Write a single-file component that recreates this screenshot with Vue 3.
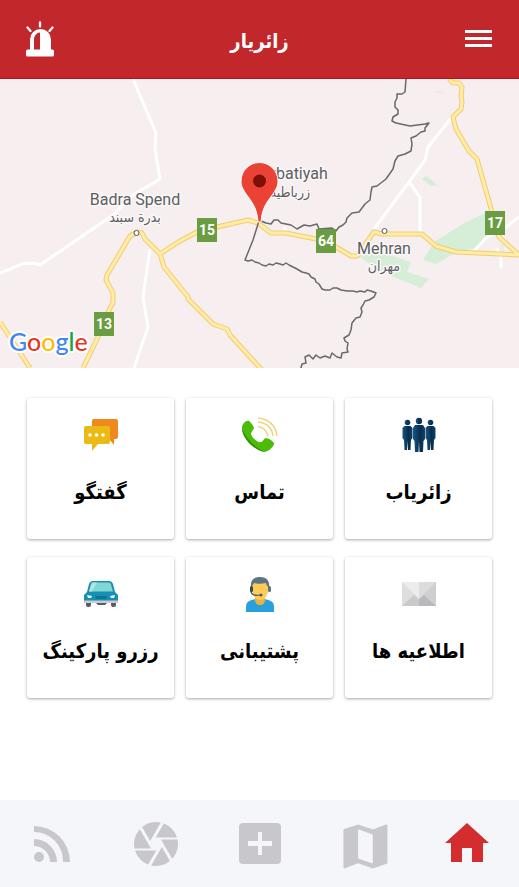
<template>
  <div class="app-page" dir="rtl" lang="fa">
    <header class="top-bar">
      <button class="icon-btn" type="button" aria-label="منو">
        <svg width="28" height="20" viewBox="0 0 28 20">
          <path d="M0 1h27v3H0zM0 8h27v3H0zM0 15h27v3H0z" fill="#fff" />
        </svg>
      </button>
      <h1 class="title">زائریار</h1>
      <button class="icon-btn" type="button" aria-label="اضطراری">
        <svg width="28" height="36" viewBox="0 0 28 36">
          <path d="M14 1.500v4M1.500 6.500l3 3.500M26.500 6.500l-3 3.500" stroke="#fff" stroke-width="2.300" stroke-linecap="round" />
          <path d="M4 28.500V18.500a10.500 10.500 0 0 1 21 0v10h1.500a1.500 1.500 0 0 1 1.500 1.500v4a1.500 1.500 0 0 1-1.500 1.500h-25A1.500 1.500 0 0 1 0 34v-4a1.500 1.500 0 0 1 1.500-1.500z" fill="#fff" />
          <path d="M14 11.500c-4 .5-6 3.500-6 7v10h6z" fill="#c1272b" />
        </svg>
      </button>
    </header>

    <section class="map" dir="ltr">
      <svg class="map-canvas" viewBox="0 0 519 289">
        <!-- green areas -->
        <g fill="#d6edd8">
          <path d="M422 100l4-3 12 9-7 1z" />
          <path d="M423 181l11-18 32-20 20-9h19v8l-29 27-19 4-21 12z" />
          <path d="M359 177l15-6 37 12-4 10 22 7-8 9-22-9-20-8z" />
        </g>
        <path d="M434 13l9-1 3 3z M500 165h4v12l-6 2z" fill="#efebe0" />

        <!-- minor roads -->
        <g class="minor">
          <path d="M133 0L156 54 155 70 160 100 133 116 113 136 40 186 34 184 22 185 0 194" />
          <path d="M150 170L143 218 148 248 134 289" />
          <path d="M452 38L428 68 425 81 409 103 374 150M409 103L420 118V154" />
          <path d="M519 138L506 148 486 159 474 172M497 169L501 180V189M284 148l3 6" />
        </g>

        <!-- highways: casing, then fill -->
        <g v-for="layer in ['casing', 'fill']" :key="layer" :class="['highway', layer]">
          <path v-for="road in highways" :key="road" :d="road" />
        </g>

        <!-- country border -->
        <g class="border">
          <path d="M406 0L405 13 402 15 397 15 397 19 395 23 395 28 398 31 398 35 393 38 392 42 396 44 410 47 425 45 429 44 425 49 425 52 421 53 416 57 411 59 412 65 411 72 405 75 398 77 395 82 393 90 386 100 377 107 372 108 371 113 370 121 365 125 359 133 352 134 347 139 346 143 343 146 339 148 336 152 332 149 319 150 317 145 310 147 304 146 297 150 291 146 286 145 281 144 278 141 274 141 271 145 266 144 261 142" />
          <path d="M259 142l-6 19-8 20 3 1 4-1 3 2 4 1 3 2 4 1 3-2 4 1 3-2 4 1 3 1 3-2 3 2 4 2 4 2 5 3 4 1 3 1 2 3 4 2 1 3 3 2 3 5 3 1 5 0 3-2 4 0 4 2 6 1 6 0 4 1 3-1 5 1 2-2 4 1 5 2-2 4-5 3-4 1-2 4-2 3 1 4-2 5-4 1-4 5-1 7-2 5-5 3 1 3 3 2-1 6 1 3-6 1-1 5-4-1-5-4-2 5-5-2-5 2-4-3-3 4-4-4-4 2 1 6-4 1-1 4-3 2" />
        </g>
        <circle cx="136.500" cy="154" r="2.500" class="town" />
        <circle cx="384.500" cy="152" r="2.500" class="town" />

        <!-- road shields -->
        <g v-for="s in shields" :key="s.label">
          <rect :x="s.x" :y="s.y" width="20" height="24" fill="#6a9d41" />
          <text :x="s.x + 10" :y="s.y + 17" class="shield">{{ s.label }}</text>
        </g>

        <!-- place names -->
        <text v-for="p in places" :key="p.name" :x="p.x" :y="p.y" :class="p.arabic ? 'place-ar' : 'place'">{{ p.name }}</text>

        <!-- marker -->
        <path d="M258 143C257 129 252 123 246 115C242 109 241 106 241 102A18.500 18.500 0 0 1 278 102C278 106 277 109 273 115C267 123 262 129 261 143z" fill="#ea4335" stroke="#fff" />
        <circle cx="259.500" cy="102" r="6.500" fill="#7f1009" />

        <text x="9" y="272" class="google"><tspan fill="#4285f4">G</tspan><tspan fill="#ea3323">o</tspan><tspan fill="#fbbc05">o</tspan><tspan fill="#4285f4">g</tspan><tspan fill="#17a34a">l</tspan><tspan fill="#ea3323">e</tspan></text>
      </svg>
    </section>

    <main class="cards">
      <button class="card" type="button">
        <svg class="card-icon" viewBox="0 0 36 36">
          <defs>
            <linearGradient id="suit">
              <stop offset="0" stop-color="#165785" />
              <stop offset="0.600" stop-color="#082c4c" />
              <stop offset="1" stop-color="#10436b" />
            </linearGradient>
          </defs>
          <g fill="url(#suit)">
            <circle cx="6.500" cy="5.500" r="2.800" />
            <path d="M3.500 9h6l2 2v10l-1.500 2-.5 10H7l-.5-9L6 33H3.500L3 23l-1.500-2V11z" />
            <circle cx="29.500" cy="5.500" r="2.800" />
            <path d="M26.500 9h6l2 2v10L33 23l-.5 10H30l-.5-9-.5 9h-2.500L26 23l-1.500-2V11z" />
            <circle cx="18" cy="4" r="3.200" />
            <path d="M14 8h8l2 3v11l-1.500 2L22 35h-3.500L18 24l-.5 11H14l-.5-11-1.500-2V11z" />
          </g>
        </svg>
        <span>زائریاب</span>
      </button>

      <button class="card" type="button">
        <svg class="card-icon" viewBox="0 0 36 36">
          <path d="M0 11C0 7 4 3 7 4c2 1 5 6 5 7s-3 4-3 6c1 4 7 9 10 8 2 0 3-4 5-4s7 3 8 5-4 8-9 9C14 34 0 22 0 11z" fill="#4dbb0a" />
          <path d="M0 11c3 9 13 20 23 24C13 34 0 22 0 11z" fill="#329500" />
          <g fill="none" stroke="#f3d27a" stroke-width="1.500">
            <path d="M16 9.500c6 1 9 5 10 10M16 5c9 1 14 6 15 14M16 1c11 1 18 8 19 18" />
          </g>
        </svg>
        <span>تماس</span>
      </button>

      <button class="card" type="button">
        <svg class="card-icon" viewBox="0 0 36 36">
          <path d="M11 2h22a2 2 0 0 1 2 2v16a2 2 0 0 1-2 2h-2v6l-5-6H11a2 2 0 0 1-2-2V4a2 2 0 0 1 2-2z" fill="#ee8a1d" />
          <path d="M3 9h22a2 2 0 0 1 2 2v14a2 2 0 0 1-2 2H15l-6 7v-7H3a2 2 0 0 1-2-2V11a2 2 0 0 1 2-2z" fill="#ebba16" />
          <g fill="#fff">
            <circle cx="7" cy="18" r="1.800" />
            <circle cx="13.500" cy="18" r="1.800" />
            <circle cx="20" cy="18" r="1.800" />
          </g>
        </svg>
        <span>گفتگو</span>
      </button>

      <button class="card" type="button">
        <svg class="card-icon" viewBox="0 0 36 36">
          <path d="M1 6h34v24H1z" fill="#dededf" />
          <path d="M18 6h17v24H18z" fill="#cfcfd2" />
          <path d="M1 30l12-11 5 4v7z" fill="#cacacb" />
          <path d="M35 30L23 19l-5 4v7z" fill="#b9b9bd" />
          <path d="M1 6h17v17z" fill="#ececec" />
          <path d="M35 6H18v17z" fill="#dcdcdd" />
        </svg>
        <span>اطلاعیه ها</span>
      </button>

      <button class="card" type="button">
        <svg class="card-icon" viewBox="0 0 36 36">
          <path d="M4 36v-5c0-5 3-7 10-8h8c7 1 10 3 10 8v5z" fill="#28a0dc" />
          <path d="M13 20h10v4c0 3-2 5-5 5s-5-2-5-5z" fill="#eeb13c" />
          <path d="M10 9c0-4 3-6 8-6s9 2 9 7c0 8-4 14-9 14s-9-7-8-15z" fill="#fdcd56" />
          <path d="M9 12C8 5 11 1 18 1s10 4 9 11c-2-2-3-4-3-5-4 1-9 1-12 0z" fill="#5d7385" />
          <path d="M9 11v4c0 4 4 5 9 4" fill="none" stroke="#445868" stroke-width="1.200" />
          <rect x="8" y="10" width="3" height="6" rx="1.500" fill="#34495a" />
          <rect x="26" y="10" width="3" height="6" rx="1.500" fill="#5d7385" />
          <circle cx="19" cy="19" r="1.500" fill="#445868" />
        </svg>
        <span>پشتیبانی</span>
      </button>

      <button class="card" type="button">
        <svg class="card-icon" viewBox="0 0 36 36">
          <path d="M3 25h5v4a2 2 0 0 1-2 2H5a2 2 0 0 1-2-2zM28 25h5v4a2 2 0 0 1-2 2h-1a2 2 0 0 1-2-2zM13 25h11v2l-2 2h-7l-2-2z" fill="#5b5b5d" />
          <path d="M10 5h16c2 0 3 1 4 3l2 8 3 3v7H1v-7l3-3 2-8c1-2 2-3 4-3z" fill="#158fb3" />
          <path d="M10 6.500h16c1 0 2 1 2 2l2 7H6l2-7c0-1 1-2 2-2z" fill="#83d6d2" />
          <path d="M14 6.500L9 15.500H6l2-7c0-1 1-2 2-2z" fill="#aee5df" />
          <path d="M1 24.500h34V27H1z" fill="#c9cdd0" />
          <path d="M4 19l5 1-1 2H5zM32 19l-5 1 1 2h3z" fill="#effbff" />
          <path d="M12 20h12l-1 3H13z" fill="#097698" />
        </svg>
        <span>رزرو پارکینگ</span>
      </button>
    </main>

    <nav class="tab-bar">
      <a v-for="tab in tabs" :key="tab.label" href="#" :class="{ active: tab.active }" :aria-label="tab.label">
        <svg width="44" height="44" :viewBox="tab.box">
          <path :d="tab.icon" fill="currentColor" fill-rule="evenodd" />
        </svg>
      </a>
    </nav>
  </div>
</template>

<script setup>
const highways = [
  'M0 243L30 289',
  'M83 289L98 258 109 231 113 224V214L106 201 107 196 130 157 137 153 142 154 145 160 160 175 164 188 188 218 188 220 213 245 227 250 230 256 262 291',
  'M160 175L180 162 197 153 217 148 248 141 258 144 271 154 286 154 316 160 336 168 351 177 357 177 374 153 382 155 422 155 436 167 456 173 519 176',
  'M449 0L453 4 459 4 462 8 461 17 462 23 461 30 453 38 456 50 469 72 477 80 492 133 499 158 519 176'
]

const shields = [
  { label: '15', x: 197, y: 139 },
  { label: '64', x: 316, y: 150 },
  { label: '17', x: 485, y: 132 },
  { label: '13', x: 94, y: 233 }
]

const places = [
  { name: 'Badra Spend', x: 135, y: 126 },
  { name: 'بدرة سبند', x: 135, y: 143, arabic: true },
  { name: 'Zurbatiyah', x: 290, y: 100 },
  { name: 'زرباطية', x: 290, y: 118, arabic: true },
  { name: 'Mehran', x: 384, y: 175 },
  { name: 'مهران', x: 384, y: 192, arabic: true }
]

const tabs = [
  {
    label: 'خانه',
    active: true,
    box: '0 0 44 44',
    icon: 'M22 1L44 21H38V40H27V26H17V40H6V21H0z'
  },
  {
    label: 'نقشه',
    box: '2 2 18 18',
    icon: 'M20.500 3l-.16.03L15 5.100 9 3 3.360 4.900c-.21.07-.36.25-.36.48V20.500c0 .28.22.5.5.5l.16-.03L9 18.900l6 2.100 5.640-1.900c.21-.07.36-.25.36-.48V3.500c0-.28-.22-.5-.5-.5zM15 19l-6-2.110V5l6 2.110V19z'
  },
  {
    label: 'افزودن',
    box: '0 1 44 44',
    icon: 'M5 2H39A4 4 0 0 1 43 6V39A4 4 0 0 1 39 43H5A4 4 0 0 1 1 39V6A4 4 0 0 1 5 2zM20 11V20H10V25H20V34H24V25H34V20H24V11z'
  },
  {
    label: 'دوربین',
    box: '2 2 20 20',
    icon: 'M9.400 10.500l4.770-8.260C13.470 2.090 12.750 2 12 2c-2.400 0-4.600.85-6.320 2.250l3.660 6.350.06-.1zM21.540 9c-.92-2.920-3.150-5.260-6-6.340L11.880 9h9.660zm.26 1h-7.490l.29.5 4.760 8.250C21 16.970 22 14.610 22 12c0-.69-.07-1.350-.2-2zM8.540 12l-3.900-6.750C3.010 7.030 2 9.390 2 12c0 .69.07 1.350.2 2h7.490l-1.150-2zm-6.080 3c.92 2.920 3.150 5.260 6 6.340L12.120 15H2.460zm11.270 0l-3.900 6.760c.7.15 1.420.24 2.170.24 2.400 0 4.600-.85 6.320-2.250l-3.660-6.350-.93 1.600z'
  },
  {
    label: 'خبرها',
    box: '0 2 44 44',
    icon: 'M4 6A36 36 0 0 1 40 42H33A29 29 0 0 0 4 12zM4 19A23 23 0 0 1 27 42H20A16 16 0 0 0 4 26zM4 37A5 5 0 0 1 14 37A5 5 0 0 1 4 37z'
  }
]
</script>

<style>
body {
  margin: 0;
}
</style>

<style scoped>
.app-page {
  min-height: 100vh;
  display: flex;
  flex-direction: column;
  background: #fff;
  font-family: "DejaVu Sans Condensed", "DejaVu Sans", sans-serif;
}

button {
  border: 0;
  padding: 0;
  font-family: inherit;
  cursor: pointer;
}

/* === Header === */
.top-bar {
  box-sizing: border-box;
  height: 79px;
  padding: 0 26px;
  display: flex;
  align-items: center;
  justify-content: space-between;
  background: #c1272b;
  border-bottom: 1px solid #b71216;
}

.icon-btn {
  display: flex;
  background: none;
}

.title {
  margin: 0;
  padding-top: 4px;
  color: #fff;
  font-size: 20px;
  line-height: 30px;
}

/* === Map === */
.map {
  background: #f6eeef;
}

.map-canvas {
  display: block;
  width: 100%;
}

.minor {
  fill: none;
  stroke: #fff;
  stroke-width: 3;
}

.highway {
  fill: none;
  stroke-linejoin: round;
}

.highway.casing { stroke: #f1cc72; stroke-width: 5; }
.highway.fill { stroke: #ffeda6; stroke-width: 3; }

.border {
  fill: none;
  stroke: #6b6869;
  stroke-width: 1.5;
  stroke-linejoin: round;
}

.town {
  fill: #fff;
  stroke: #555;
}

.shield {
  fill: #fff;
  font: bold 14px Roboto, sans-serif;
  text-anchor: middle;
}

.place,
.place-ar {
  fill: #5c6064;
  stroke: #fbf7f7;
  stroke-width: 3px;
  stroke-linejoin: round;
  paint-order: stroke;
  text-anchor: middle;
  font: 16px Roboto, sans-serif;
}

.place-ar {
  font: 14px "DejaVu Sans Condensed", "DejaVu Sans", sans-serif;
}

.google {
  font: 500 25px Lato, sans-serif;
  stroke: #fff;
  stroke-width: 4px;
  stroke-linejoin: round;
  paint-order: stroke;
}

/* === Cards === */
.cards {
  flex: 1;
  display: grid;
  grid-template-columns: repeat(3, 1fr);
  align-content: start;
  gap: 18px 12px;
  padding: 30px 27px;
}

.card {
  height: 141px;
  padding-top: 19px;
  display: flex;
  flex-direction: column;
  align-items: center;
  justify-content: flex-start;
  gap: 24px;
  background: #fff;
  color: #000;
  border-radius: 3px;
  box-shadow: 0 1px 3px rgba(0, 0, 0, 0.35);
  font-size: 20px;
  font-weight: bold;
  line-height: 30px;
  white-space: nowrap;
}

.card-icon {
  width: 36px;
  height: 36px;
}

/* === Bottom tabs === */
.tab-bar {
  height: 87px;
  display: flex;
  background: #f5f6f9;
}

.tab-bar a {
  flex: 1;
  display: flex;
  align-items: center;
  justify-content: center;
  color: #c8c7cc;
}

.tab-bar svg {
  overflow: visible;
}

.tab-bar .active {
  color: #d32d2d;
}
</style>
